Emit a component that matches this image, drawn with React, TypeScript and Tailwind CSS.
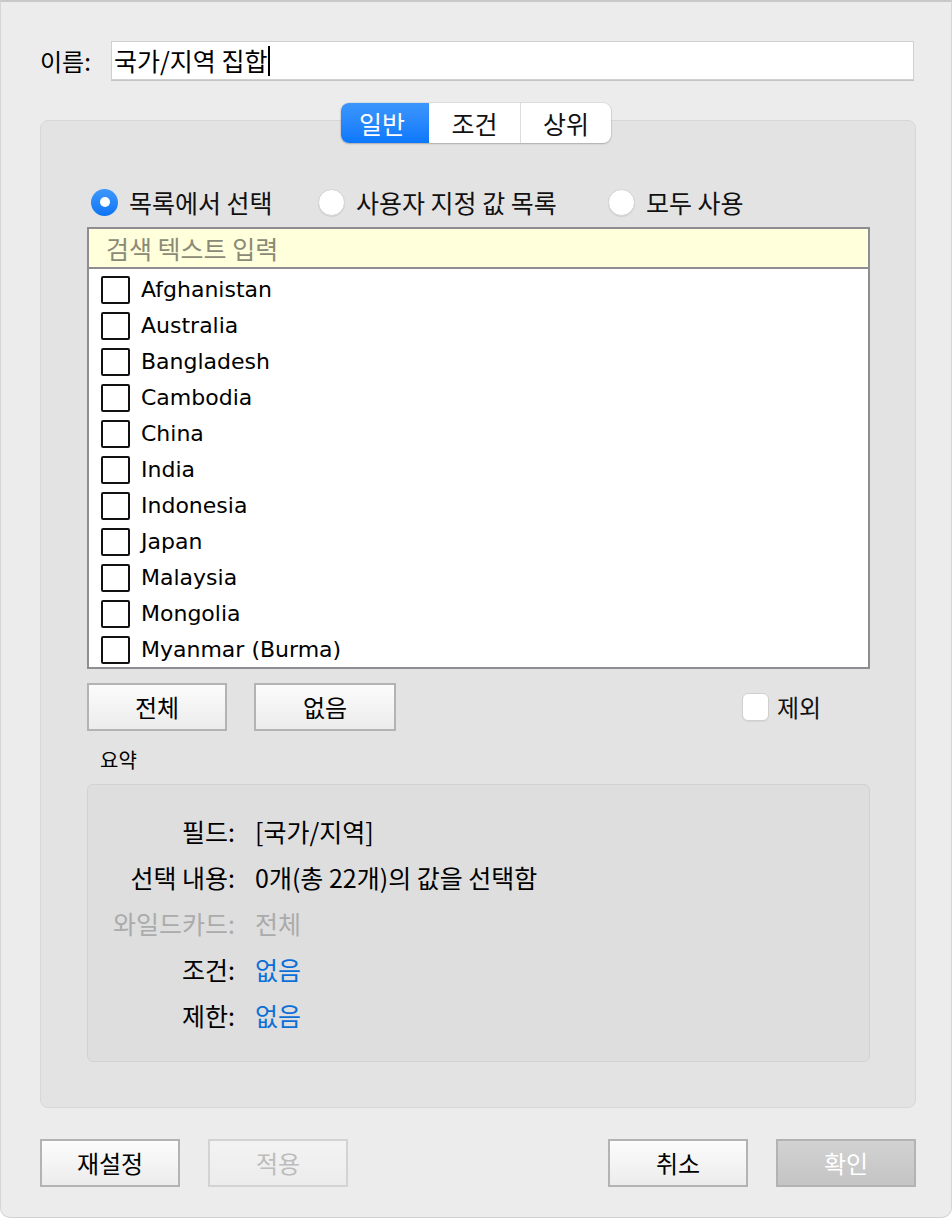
import { ReactNode } from "react";

const KR = "font-['Noto_Sans_CJK_KR',sans-serif]";
const LATIN = "font-['DejaVu_Sans','Noto_Sans_CJK_KR',sans-serif]";

const countries = [
  "Afghanistan",
  "Australia",
  "Bangladesh",
  "Cambodia",
  "China",
  "India",
  "Indonesia",
  "Japan",
  "Malaysia",
  "Mongolia",
  "Myanmar (Burma)",
];

function Radio({ checked, label }: { checked?: boolean; label: string }) {
  return (
    <div className="flex items-center gap-[11px]">
      {checked ? (
        <span className="flex h-[27px] w-[27px] items-center justify-center rounded-full bg-linear-to-b from-[#3d98fc] to-[#0a74f4]">
          <span className="h-[10px] w-[10px] rounded-full bg-white" />
        </span>
      ) : (
        <span className="h-[27px] w-[27px] rounded-full border border-[#d2d2d2] bg-white shadow-[0_1px_1px_rgba(0,0,0,0.08)]" />
      )}
      <span className="text-[25px] leading-none text-[#111]">{label}</span>
    </div>
  );
}

function Btn({
  children,
  variant = "normal",
  className = "",
}: {
  children: ReactNode;
  variant?: "normal" | "disabled" | "default";
  className?: string;
}) {
  const styles = {
    normal: "border-[#b3b3b3] bg-linear-to-b from-[#fcfcfc] to-[#ececec] text-black",
    disabled: "border-[#d3d3d3] bg-linear-to-b from-[#f3f3f3] to-[#ececec] text-[#bcbcbc]",
    default: "border-[#b3b3b3] bg-linear-to-b from-[#d2d2d2] to-[#c4c4c4] text-white",
  }[variant];
  return (
    <button
      className={`flex h-[48px] w-[140px] items-center justify-center border-2 text-[24px] leading-none ${styles} ${className}`}
    >
      {children}
    </button>
  );
}

function SummaryRow({
  label,
  value,
  tone = "normal",
}: {
  label: string;
  value: string;
  tone?: "normal" | "muted" | "link";
}) {
  const labelColor = tone === "muted" ? "text-[#ababab]" : "text-black";
  const valueColor =
    tone === "muted" ? "text-[#ababab]" : tone === "link" ? "text-[#0b6fd8]" : "text-black";
  return (
    <div className="flex h-[46px] items-center text-[25px] leading-none">
      <span className={`w-[147px] whitespace-nowrap text-right ${labelColor}`}>{label}</span>
      <span className={`ml-[20px] whitespace-nowrap ${valueColor}`}>{value}</span>
    </div>
  );
}

export default function App() {
  return (
    <div className={`min-h-screen bg-white ${KR}`}>
      <div className="flex h-[1218px] w-[952px] flex-col overflow-hidden rounded-b-[10px] border-x border-b border-t-2 border-x-[#d6d6d6] border-b-[#d0d0d0] border-t-[#c8c8c8] bg-[#ececec]">
        {/* Name row */}
        <div className="mt-[39px] flex h-[39px] items-center pl-[39px]">
          <span className="w-[71px] text-[24px] leading-none text-black">이름:</span>
          <div className="flex h-[39px] w-[803px] items-center border border-[#d0d0d0] bg-white pl-[2px] shadow-[0_1px_0_#c4c4c4]">
            <span className="text-[25px] leading-none text-black">국가/지역 집합</span>
            <span className="ml-[1px] h-[30px] w-[2px] bg-black" />
          </div>
        </div>

        {/* Group box */}
        <div className="relative ml-[39px] mt-[40px] h-[988px] w-[876px] rounded-[8px] border border-[#d7d7d7] bg-[#e3e3e3]">
          {/* Tabs */}
          <div className="absolute left-[300px] top-[-18px] flex h-[40px] w-[270px] overflow-hidden rounded-[8px] bg-white text-[25px] leading-none shadow-[0_0_0_1px_rgba(0,0,0,0.06),0_1px_2px_rgba(0,0,0,0.2)]">
            <div className="flex w-[88px] items-center justify-center bg-linear-to-b from-[#3b95fc] to-[#0a78fb] pr-[6px] text-white">
              일반
            </div>
            <div className="flex w-[92px] items-center justify-center border-r border-[#dcdcdc] text-[#111]">
              조건
            </div>
            <div className="flex flex-1 items-center justify-center text-[#111]">상위</div>
          </div>

          {/* Radio row */}
          <div className="mt-[67px] flex h-[28px] items-center pl-[50px]">
            <div className="w-[227px]">
              <Radio checked label="목록에서 선택" />
            </div>
            <div className="w-[290px]">
              <Radio label="사용자 지정 값 목록" />
            </div>
            <Radio label="모두 사용" />
          </div>

          {/* List */}
          <div className="ml-[46px] mt-[11px] flex h-[442px] w-[783px] flex-col border-2 border-[#8d8d92] bg-white">
            <div className="flex h-[40px] shrink-0 items-center border-b-2 border-[#8d8d92] bg-[#ffffdc] pl-[17px] text-[25px] leading-none text-[#8a8a76]">
              검색 텍스트 입력
            </div>
            <div className="flex flex-col pt-[3px]">
              {countries.map((c) => (
                <div key={c} className="flex h-[36px] items-center pl-[12px]">
                  <span className="h-[28px] w-[29px] rounded-[2px] border-2 border-[#111] bg-white" />
                  <span className={`ml-[11px] text-[22px] leading-none text-black ${LATIN}`}>{c}</span>
                </div>
              ))}
            </div>
          </div>

          {/* Select buttons */}
          <div className="ml-[46px] mt-[14px] flex h-[48px] items-center">
            <Btn>전체</Btn>
            <Btn className="ml-[27px] w-[142px]">없음</Btn>
            <div className="ml-[346px] flex items-center gap-[8px]">
              <span className="h-[28px] w-[27px] rounded-[6px] border border-[#cfcfcf] bg-white shadow-[0_1px_1px_rgba(0,0,0,0.06)]" />
              <span className="text-[24px] leading-none text-[#111]">제외</span>
            </div>
          </div>

          <div className="ml-[59px] mt-[19px] text-[20px] leading-none text-black">요약</div>

          {/* Summary */}
          <div className="ml-[46px] mt-[14px] flex h-[278px] w-[783px] flex-col rounded-[6px] border border-[#d2d2d2] bg-[#dedede] pt-[23px]">
            <SummaryRow label="필드:" value="[국가/지역]" />
            <SummaryRow label="선택 내용:" value="0개(총 22개)의 값을 선택함" />
            <SummaryRow label="와일드카드:" value="전체" tone="muted" />
            <SummaryRow label="조건:" value="없음" tone="link" />
            <SummaryRow label="제한:" value="없음" tone="link" />
          </div>
        </div>

        {/* Bottom buttons */}
        <div className="ml-[39px] mt-[31px] flex items-center">
          <Btn>재설정</Btn>
          <Btn variant="disabled" className="ml-[28px]">
            적용
          </Btn>
          <Btn className="ml-[260px]">취소</Btn>
          <Btn variant="default" className="ml-[28px]">
            확인
          </Btn>
        </div>
      </div>
    </div>
  );
}
